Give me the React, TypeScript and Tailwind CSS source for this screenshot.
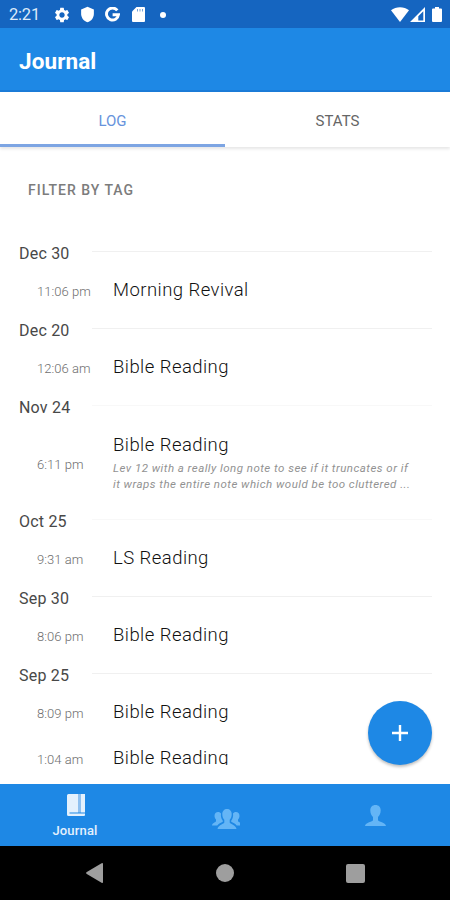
import React, { useState } from 'react'
import { MdSettings, MdShield } from 'react-icons/md'

interface Entry {
  time: string;
  title: string;
  note?: string[];
}

interface Day {
  date: string;
  faintLine?: boolean;
  entries: Entry[];
}

const days: Day[] = [
  { date: "Dec 30", entries: [{ time: "11:06 pm", title: "Morning Revival" }] },
  { date: "Dec 20", entries: [{ time: "12:06 am", title: "Bible Reading" }] },
  {
    date: "Nov 24",
    faintLine: true,
    entries: [
      {
        time: "6:11 pm",
        title: "Bible Reading",
        note: [
          "Lev 12 with a really long note to see if it truncates or if",
          "it wraps the entire note which would be too cluttered ...",
        ],
      },
    ],
  },
  { date: "Oct 25", faintLine: true, entries: [{ time: "9:31 am", title: "LS Reading" }] },
  { date: "Sep 30", entries: [{ time: "8:06 pm", title: "Bible Reading" }] },
  {
    date: "Sep 25",
    entries: [
      { time: "8:09 pm", title: "Bible Reading" },
      { time: "1:04 am", title: "Bible Reading" },
    ],
  },
];


const StatusBar: React.FC = () => (
  <div className="flex h-7 shrink-0 items-center bg-[#1565c0] pl-[9px] pr-[8px] pt-px text-white">
    <span className="w-[44px] pt-[2px] text-[16.5px] leading-none tracking-[-0.2px] text-[#dceafa]">2:21</span>
    <MdSettings className="size-[18px]" />
    <MdShield className="ml-[8px] size-[17px]" />
    <svg className="ml-[9px] size-[15px]" viewBox="0 0 15 15" fill="none" stroke="currentColor" strokeWidth="2.9">
      <path d="M12.3 3.4A6 6 0 1 0 13.5 7.7H7.6" />
    </svg>
    {/* sd card */}
    <svg className="ml-[12px] h-[15px] w-[13px]" viewBox="0 0 13 15">
      <path fill="currentColor" d="M4.500 0H12a1 1 0 0 1 1 1v13a1 1 0 0 1-1 1H1a1 1 0 0 1-1-1V4.500z" />
      <path stroke="#1565c0" strokeOpacity="0.6" d="M5.500 2v2.500M8 2v2.500M10.500 2v2.500" />
    </svg>
    <span className="ml-[15px] size-[6px] rounded-full bg-white" />
    <svg className="ml-auto h-[15px] w-[18px]" viewBox="0 0 18 15" fill="currentColor">
      <path d="M0 3.2C5-.9 13-.9 18 3.2L9 15z" />
    </svg>
    <svg className="ml-px h-[15px] w-[15px]" viewBox="0 0 15 15">
      <path fill="currentColor" fillRule="evenodd" d="M15 0v15H0zM13.3 4.2 8.300 9.200v4.200h5z" />
    </svg>
    <svg className="ml-[7px] h-[15px] w-[10px]" viewBox="0 0 10 15" fill="currentColor">
      <path d="M3 0h4v1.500h2a1 1 0 0 1 1 1V14a1 1 0 0 1-1 1H1a1 1 0 0 1-1-1V2.500a1 1 0 0 1 1-1h2z" />
    </svg>
  </div>
);


const EntryRow: React.FC<{ entry: Entry }> = ({ entry }) => (
  <div className={entry.note ? "flex h-[83px] items-center" : "flex h-[46px] items-center"}>
    <span className="w-[113px] shrink-0 pl-[37px] text-[13px] font-light leading-[18px] tracking-[0.05px] text-[#6e6e6e]">{entry.time}</span>
    <div className={entry.note ? "pb-[5px]" : "pb-[5px]"}>
      <p className="whitespace-nowrap text-[18.5px] font-light leading-6 tracking-[0.45px] text-[#111111]">{entry.title}</p>
      {entry.note && (
        <div className="pt-[3px] text-[11.5px] italic leading-4 tracking-[0.47px] text-[#929292]">
          {entry.note.map((line) => (
            <p key={line} className="whitespace-nowrap">{line}</p>
          ))}
        </div>
      )}
    </div>
  </div>
);


const App: React.FC = () => {
  const [tab, setTab] = useState<"log" | "stats">("log");

  return (
    <div className="relative flex h-[900px] w-[450px] flex-col overflow-hidden bg-white font-['Roboto',sans-serif]">
      <StatusBar />

      <header className="flex h-16 shrink-0 items-center border-b-2 border-[#1b7cd8] bg-[#1e88e5] pl-[19px] pt-[5px]">
        <h1 className="text-[22.5px] font-bold leading-none tracking-[0.1px] text-white">Journal</h1>
      </header>

      {/* tabs */}
      <div className="flex h-[55px] shrink-0 bg-white text-[15px] shadow-[0_2px_3px_rgba(0,0,0,0.1)]">
        <button
          onClick={() => setTab("log")}
          className={tab === "log" ? "flex-1 border-b-[3px] border-[#7da5e3] pt-[7px] text-[#6793dc]" : "flex-1 border-b-[3px] border-transparent pt-[7px] text-[#666666]"}
        >
          LOG
        </button>
        <button
          onClick={() => setTab("stats")}
          className={tab === "stats" ? "flex-1 border-b-[3px] border-[#7da5e3] pt-[7px] text-[#6793dc]" : "flex-1 border-b-[3px] border-transparent pt-[7px] text-[#666666]"}
        >
          STATS
        </button>
      </div>

      {/* journal list */}
      <main className="h-[618px] shrink-0 overflow-hidden">
        <div className="flex h-[91px] items-start pl-7 pt-[34px]">
          <button className="text-[14px] font-medium leading-[18px] tracking-[1px] text-[#7c7c7c]">FILTER BY TAG</button>
        </div>
        {days.map((day) => (
          <section key={day.date}>
            <div className="flex h-[31px] items-center pl-[19px] pr-[18px]">
              <h2 className="w-[73px] text-[16px] font-normal leading-5 tracking-[0.2px] text-[#484848]">{day.date}</h2>
              <div className={day.faintLine ? "mb-[4px] h-px flex-1 bg-[#f8f8f8]" : "mb-[4px] h-px flex-1 bg-[#f0f0f0]"} />
            </div>
            {day.entries.map((entry) => (
              <EntryRow key={entry.time} entry={entry} />
            ))}
          </section>
        ))}
      </main>

      {/* add entry */}
      <button className="absolute right-[18px] top-[701px] flex size-16 items-center justify-center rounded-full bg-[#1e88e5] text-white shadow-[0_2px_3px_rgba(0,0,0,0.25)]" aria-label="Add entry">
        <svg className="size-[16px]" viewBox="0 0 16 16" fill="none" stroke="currentColor" strokeWidth="2.4">
          <path d="M8 0v16M0 8h16" />
        </svg>
      </button>

      <nav className="mt-auto grid h-[62px] shrink-0 grid-cols-3 bg-[#1e88e5]">
        <button className="flex flex-col items-center pt-[10px] text-[#e4f1fd]">
          <svg className="ml-[2px] h-[22px] w-[18px]" viewBox="0 0 18 22">
            <path fill="currentColor" d="M1.5 0H11v18.5H2.5v1H18V21a1 1 0 0 1-1 1H1.5A1.5 1.5 0 0 1 0 20.5v-19A1.5 1.5 0 0 1 1.5 0z" />
            <path fill="#8fc0ef" d="M11 0h3v18.5h-3z" />
            <path fill="currentColor" d="M14 0h4v18.5h-4z" />
          </svg>
          <span className="mt-[7px] text-[13px] font-medium leading-[16px] tracking-[0.15px]">Journal</span>
        </button>
        <button className="flex justify-center pt-[25px] text-[#64b5f6]" aria-label="Groups">
          <svg className="ml-[2px] h-[20px] w-[28px]" viewBox="0 0 28 20" fill="currentColor">
            <path d="M15 0c2.800 0 4.700 2 4.700 5.300 0 2.300-.8 4.300-2 5.500v2.700c0 1.500 6.200 2.300 6.800 6.500H5.500c.6-4.200 6.800-5 6.800-6.500v-2.700c-1.200-1.200-2-3.200-2-5.500C10.300 2 12.200 0 15 0z" />
            <path d="M6 3c1.400 0 2.500.6 3 1.500-.4 3 .3 5.500 1.800 7.200v1.100c-1.800.9-4.300 1.900-5.500 3.700H0c.3-2.800 4-3.100 4-4.500v-1.400C3 9.500 2.500 8.200 2.500 6.700 2.500 4.500 4 3 6 3z" />
            <path d="M24 3c-1.400 0-2.500.6-3 1.500.4 3-.3 5.500-1.800 7.200v1.100c1.800.9 4.300 1.900 5.500 3.700H28v-3c-1-.5-2-.9-2-1.500v-1.400c1-1.100 1.500-2.400 1.500-3.900C27.500 4.500 26 3 24 3z" />
          </svg>
        </button>
        <button className="flex justify-center pt-[21px] text-[#64b5f6]" aria-label="Profile">
          <svg className="h-[21px] w-[21px]" viewBox="0 0 21 22" preserveAspectRatio="none" fill="currentColor">
            <path d="M10.5 0c3.3 0 5.2 2.200 5.200 5.600 0 3.200-1.200 5.500-2.700 7v3c0 2.400 7.700 1.900 8 6.400H0c.3-4.500 8-4 8-6.400v-3c-1.500-1.500-2.700-3.800-2.700-7C5.300 2.200 7.200 0 10.500 0z" />
          </svg>
        </button>
      </nav>

      {/* android system buttons */}
      <div className="grid h-[54px] shrink-0 grid-cols-[95px_1fr_95px] items-center bg-black px-[47px] text-[#9e9e9e]">
        <svg className="h-[20px] w-[17px] justify-self-center" viewBox="0 0 17 20" fill="currentColor">
          <path d="M15.6.2Q17-.4 17 1v18q0 1.400-1.400.8L.8 10.900Q-.6 10 .8 9.100z" />
        </svg>
        <span className="size-[18px] justify-self-center rounded-full bg-[#9e9e9e]" />
        <span className="size-[19px] justify-self-center rounded-[2px] bg-[#9e9e9e]" />
      </div>
    </div>
  )
}

export default App
